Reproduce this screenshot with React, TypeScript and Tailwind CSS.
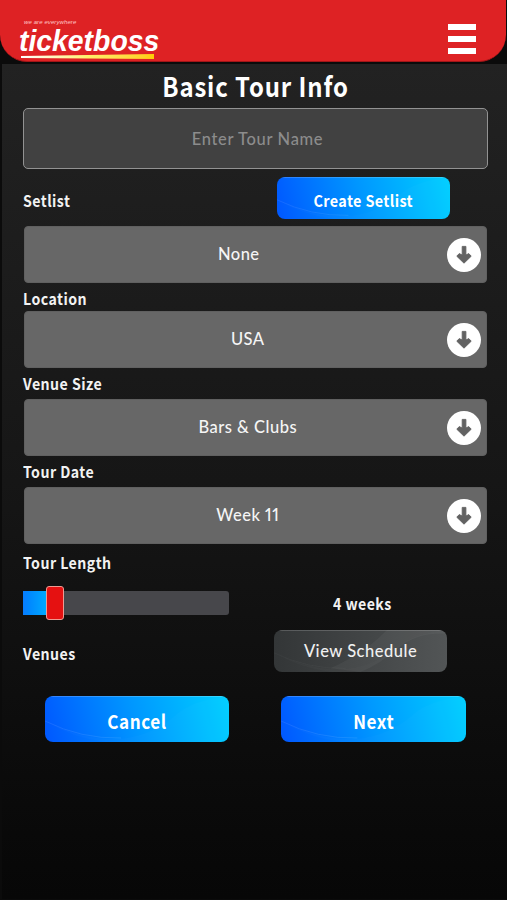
import { useState } from "react";
import { clsx } from "clsx";

const headingFont = "font-['Noto_Sans_CJK_JP','Noto_Sans',sans-serif] font-bold";
const bodyFont = "font-['Lato',sans-serif] font-medium proportional-nums";

function Header() {
    return (
        <header className="mr-px h-[62px] bg-[#de2224] rounded-b-[27px] border-b border-[#a31518] flex justify-between pl-5 pr-[30px]">
            <div className="pt-[18px] w-36 font-['Liberation_Sans',Arial,sans-serif] italic text-white">
                <p className="pl-1 text-[6px] leading-[8px] tracking-[0.1px] text-[#ffc4c4]">we are everywhere</p>
                <p className="text-[30px] leading-[30px] h-7 font-bold whitespace-nowrap origin-left scale-x-[0.945] -translate-x-px">
                    ticketboss
                </p>
                <div className="ml-[1px] w-[133px] h-[5px] bg-linear-to-r from-white via-[#fff06a] to-[#ffcc00] [clip-path:polygon(0_40%,100%_0,100%_100%,0_80%)]" />
            </div>
            <button aria-label="Menu" className="mt-6 h-[30px] w-7 flex flex-col justify-between">
                <span className="h-[6px] w-full bg-white" />
                <span className="h-[6px] w-full bg-white" />
                <span className="h-[6px] w-full bg-white" />
            </button>
        </header>
    );
}

function ArrowBadge() {
    return (
        <svg viewBox="0 0 34 34" className="w-[34px] h-[34px] shrink-0">
            <circle cx="17" cy="17" r="17" fill="#fff" />
            <path
                d="M15.2 8.4h3.7v8.6l2.9-1.4 2.4 2.6L17 25.2l-7.2-7 2.4-2.6 3 1.4z"
                fill="#626262"
                stroke="#626262"
                strokeWidth="0.9"
                strokeLinejoin="round"
            />
        </svg>
    );
}

function Label({ children }: { children: string }) {
    return (
        <span className={clsx(headingFont, "text-[16px] leading-4 tracking-[0.5px] text-[#f2f2f2] whitespace-nowrap origin-left scale-x-[0.885]")}>
            {children}
        </span>
    );
}

function SelectBox({ value, className }: { value: string; className?: string }) {
    return (
        <button className="mx-px h-[57px] shrink-0 flex items-center pl-10 pr-[5.5px] rounded-[4px] border border-[#606060] bg-[#676767]">
            <span className={clsx(bodyFont, "flex-1 text-center text-[16.5px] tracking-[0.5px] text-[#f5f5f5]", className ?? "pr-4")}>
                {value}
            </span>
            <ArrowBadge />
        </button>
    );
}

interface GlossButtonProps {
    children: string;
    className: string;
    muted?: boolean;
}

function GlossButton({ children, className, muted }: GlossButtonProps) {
    return (
        <button
            className={clsx(
                "relative overflow-hidden shrink-0 rounded-[8px] flex items-center justify-center whitespace-nowrap",
                muted
                    ? "bg-linear-to-r from-[#333637] to-[#505354] text-[#f0f0f0]"
                    : "bg-linear-[75deg] from-[#0057ff] via-[#0098ff] to-[#00d0ff] text-white",
                className
            )}
        >
            {/* Curved sheen behind the caption */}
            <svg viewBox="0 0 184 46" preserveAspectRatio="none" className="absolute inset-0 w-full h-full">
                <path d="M0 25Q38 44 74 43Q108 40 132 18Q148 4 184 0V46H60Q28 42 0 25Z" fill="#fff" opacity="0.015" />
                <path d="M0 25Q36 43 76 42" fill="none" stroke="#fff" strokeWidth="0.7" opacity={muted ? 0.05 : 0.13} />
                {muted && <path d="M92 46Q112 38 132 20T184 4V0H120Q98 24 60 42Z" fill="#fff" opacity="0.04" />}
                <path d="M6 0.5H178" stroke="#fff" opacity="0.2" />
            </svg>
            <span className={clsx("relative", !muted && "scale-x-[0.9]")}>{children}</span>
        </button>
    );
}

export default function App() {
    const [tourName, setTourName] = useState("");
    const weeks = 4;
    const maxWeeks = 26;

    return (
        <div className="h-[900px] w-[507px] overflow-hidden bg-[#0b0b0b] flex flex-col">
            <Header />
            <main className="mt-[2px] ml-[2px] mb-px flex-1 bg-linear-to-b from-[#222222] via-[#161616] via-50% to-[#070707] pl-[21px] pr-[19px] flex flex-col">
                <h1 className={clsx(headingFont, "h-11 text-center text-[27px] leading-[44px] tracking-[1px] text-white scale-x-[0.885]")}>
                    Basic Tour Info
                </h1>
                <input
                    value={tourName}
                    onChange={(e) => setTourName(e.target.value)}
                    placeholder="Enter Tour Name"
                    className={clsx(
                        bodyFont,
                        "h-[61px] shrink-0 pl-1 pt-px rounded-[5px] border border-[#929292] bg-[#414141] text-center text-[16.5px] tracking-[0.65px] text-white placeholder:text-[#8c8c8c] focus:outline-none"
                    )}
                />
                <div className="h-[57px] shrink-0 pt-2 pr-[38px] flex justify-between">
                    <div className="pt-[15px] flex"><Label>Setlist</Label></div>
                    <GlossButton className={clsx(headingFont, "w-[173px] h-[42px] text-[16px] tracking-[0.4px] pt-[4px]")}>
                        Create Setlist
                    </GlossButton>
                </div>

                <SelectBox value="None" className="pr-[34px]" />
                <div className="h-[28px] shrink-0 pt-[7px] flex"><Label>Location</Label></div>
                <SelectBox value="USA" />
                <div className="h-[31px] shrink-0 pt-[7px] flex"><Label>Venue Size</Label></div>
                <SelectBox value="Bars & Clubs" />
                <div className="h-[31px] shrink-0 pt-[7px] flex"><Label>Tour Date</Label></div>
                <SelectBox value="Week 11" />

                <div className="h-[41px] shrink-0 pt-[10px] flex"><Label>Tour Length</Label></div>
                <div className="h-[35px] shrink-0 flex items-center">
                    <div className="relative w-[206px] h-6 rounded-[3px] bg-[#47474b]">
                        <div
                            className="h-full bg-linear-to-r from-[#087cff] to-[#00b8ff]"
                            style={{ width: `${(weeks / maxWeeks) * 100}%` }}
                        />
                        <div
                            className="absolute -top-[5px] w-[18px] h-[34px] -translate-x-1/2 rounded-[3px] border border-[#ef9a92] bg-[#e51111]"
                            style={{ left: `${(weeks / maxWeeks) * 100}%` }}
                        />
                    </div>
                    <div className="ml-[49px] w-[176px] flex justify-center"><Label>4 weeks</Label></div>
                </div>
                <div className="h-[76px] shrink-0 pt-[10px] pr-[41px] flex justify-between">
                    <div className="pt-[15px] flex"><Label>Venues</Label></div>
                    <GlossButton muted className={clsx(bodyFont, "w-[173px] h-[42px] text-[16.5px] tracking-[0.5px]")}>
                        View Schedule
                    </GlossButton>
                </div>
                <div className="px-[22px] flex justify-between">
                    <GlossButton className={clsx(headingFont, "w-[184px] h-[46px] text-[19px] tracking-[0.6px] pt-[5px]")}>
                        Cancel
                    </GlossButton>
                    <GlossButton className={clsx(headingFont, "w-[185px] h-[46px] text-[19px] tracking-[0.6px] pt-[5px]")}>
                        Next
                    </GlossButton>
                </div>
            </main>
        </div>
    );
}
